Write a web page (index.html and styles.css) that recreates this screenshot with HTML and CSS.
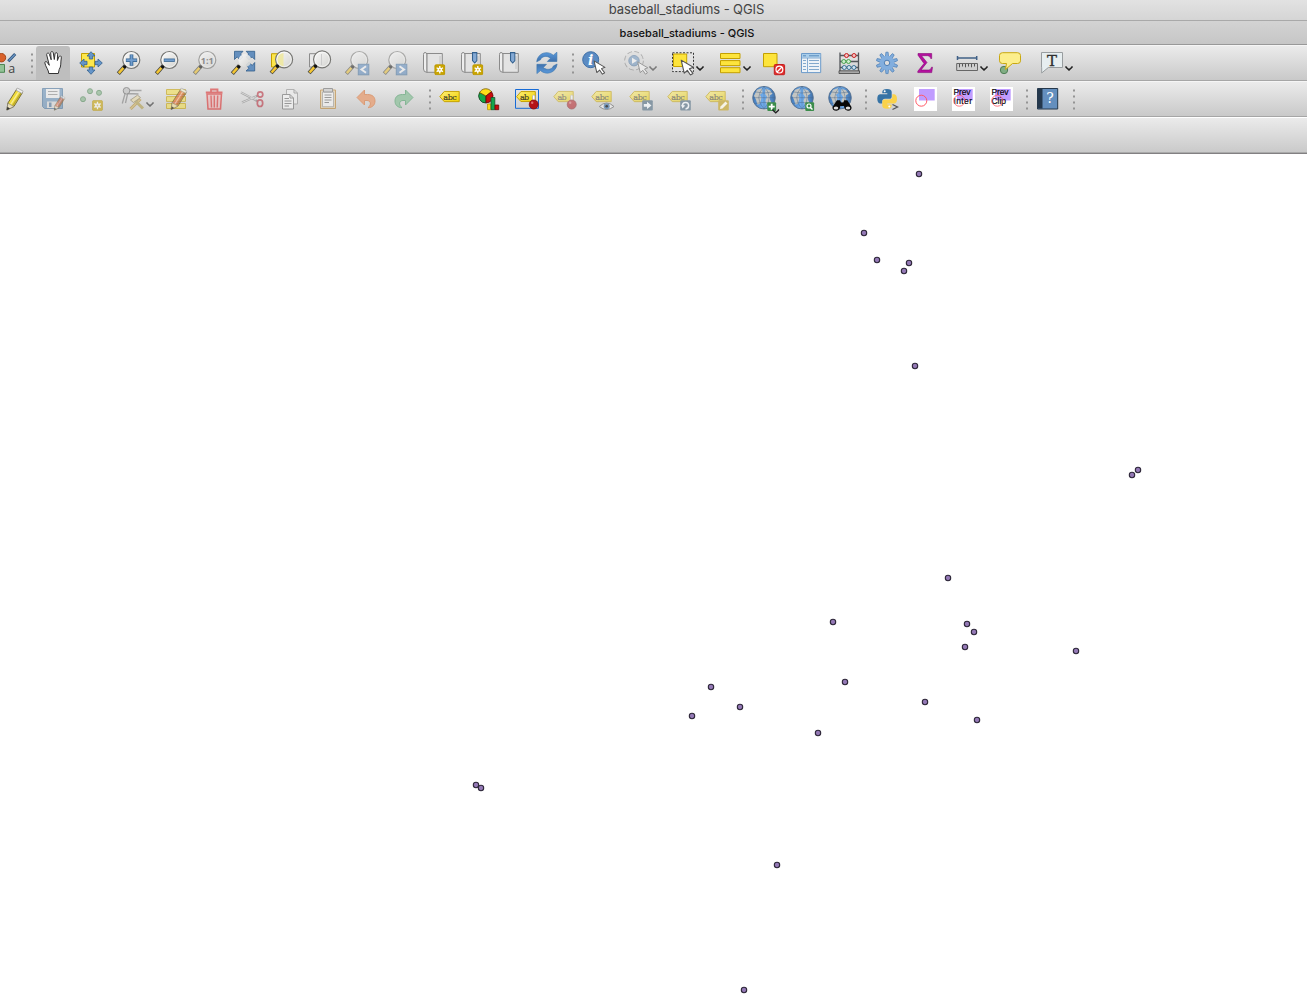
FILE: index.html
```html
<!DOCTYPE html>
<html lang="en">
<head>
<meta charset="utf-8">
<title>baseball_stadiums - QGIS</title>
<link rel="stylesheet" href="styles.css">
</head>
<body>
<svg class="defs" aria-hidden="true">
  <defs>
    <linearGradient id="gold" x1="0" y1="0" x2="1" y2="1"><stop offset="0" stop-color="#fff07a"/><stop offset="1" stop-color="#f0d000"/></linearGradient>
    <linearGradient id="lensfill" x1="0" y1="0" x2="1" y2="1"><stop offset="0" stop-color="#fbfbfb"/><stop offset="1" stop-color="#d2d2ce"/></linearGradient>
    <linearGradient id="bluefade" x1="0" y1="0" x2="0" y2="1"><stop offset="0" stop-color="#5b9bdd"/><stop offset="1" stop-color="#3f70ab"/></linearGradient>
    <linearGradient id="sea" x1="0" y1="0" x2="1" y2="0"><stop offset="0" stop-color="#3f78ba"/><stop offset=".5" stop-color="#75b2f2"/><stop offset="1" stop-color="#3e6fa8"/></linearGradient>
  </defs>
  <symbol id="lens" viewBox="0 0 38 36">
    <path d="M15.500 20.500L8.300 28.600" stroke="#4a4a40" stroke-width="4"/>
    <path d="M13.500 22.700L8.800 28.100" stroke="#f5c632" stroke-width="2.500"/>
    <circle cx="21.300" cy="15" r="8.500" fill="url(#lensfill)" stroke="#777774" stroke-width="1.200"/>
    <circle cx="21.300" cy="15" r="7.200" fill="none" stroke="#fff" stroke-width=".8" opacity=".7"/>
    <circle cx="14.700" cy="21.800" r="1.600" fill="#111"/>
  </symbol>
  <symbol id="chev" viewBox="0 0 8 6"><path d="M1 1V2L4 4.700L7 2V1" fill="none" stroke="#222" stroke-width="1.500"/></symbol>
  <symbol id="star" viewBox="0 0 11 11">
    <rect x=".4" y=".4" width="10.200" height="10.200" rx="1.600" fill="#c9a400" stroke="#b79300" stroke-width=".8"/>
    <path d="M5.500 1.800V9.200M2.300 3.600L8.700 7.400M8.700 3.600L2.300 7.400" stroke="#fff" stroke-width="1.300"/><circle cx="5.500" cy="5.500" r="2.300" fill="#fff"/><circle cx="5.500" cy="5.500" r=".9" fill="#d6ba3c"/>
  </symbol>
  <symbol id="arrow" viewBox="0 0 14 16"><path d="M.8.800L12.600 7.800L8.800 9.200L12.200 13.700L9.800 15.200L6.800 10.700L3.800 13.400Z" fill="#fff" stroke="#555" stroke-width="1.100" stroke-linejoin="round"/></symbol>
  <symbol id="scroll" viewBox="0 0 38 36">
    <path d="M12.800 8.500H28.300V27.300H12.800Z" fill="#e3e3e3" stroke="#8b8b8b"/>
    <path d="M12.800 9Q12.500 7.500 11 7.500Q9.500 7.500 9.500 9.500V24Q9.500 27.300 13 27.300Q12.700 27 12.800 24Z" fill="#eee" stroke="#8b8b8b"/>
    <path d="M26 11V24" stroke="#d3d3d3" stroke-width="2"/>
  </symbol>
  <symbol id="ribbon" viewBox="0 0 6 12"><path d="M.8.600H5.200V8.500L3 11L.8 8.500Z" fill="#84a9d4" stroke="#33618f" stroke-width="1.100"/></symbol>
  <symbol id="tag" viewBox="0 0 21 12">
    <path d="M.8 6L5.300.700H20.200V11H5.300Z" fill="url(#gold)" stroke="#c4a000" stroke-linejoin="round"/>
  </symbol>
  <symbol id="pencil" viewBox="0 0 18 24">
    <path d="M1.200 22.800L2.200 15.800L11 2L16.900 5.200L8.200 19.300Z" fill="currentColor" stroke="#6b6230" stroke-width=".9"/>
    <path d="M4.800 17.500L13.600 3.700" stroke="#fff" stroke-width="1.200" opacity=".5"/>
    <path d="M7 18.500L15.800 4.900" stroke="#7a6b18" stroke-width="1.300" opacity=".45"/>
    <path d="M10.200 3L11.700.800L17.500 4L16.200 6.200Z" fill="#eee" stroke="#999" stroke-width=".7"/>
    <path d="M1.200 22.800L2.200 16L8.200 19.300Z" fill="#eadfbd" stroke="#777" stroke-width=".6"/><path d="M1 23L1.700 19.500L4.300 21.200Z" fill="#333"/>
  </symbol>
  <symbol id="ball" viewBox="0 0 11 16"><path d="M4.300 1.800Q5.500.200 6.700 1.800V8H4.300Z" fill="#fff" stroke="#aaa" stroke-width=".7"/><circle cx="5.500" cy="10.500" r="4.500" fill="#b51218" stroke="#7e0d10" stroke-width=".8"/><circle cx="4" cy="8.800" r="1.200" fill="#dc6d70"/></symbol>
  <symbol id="globe" viewBox="0 0 24 24">
    <circle cx="12" cy="12" r="11.300" fill="url(#sea)" stroke="#56718f" stroke-width=".9"/>
    <path d="M5 4L10 2.500L10.500 7L8 9L9.500 12L8 18L5.500 19L4 14L2 10ZM13.500 3L18 4.500L20.500 8L18 9.500V14L19.500 17L15 20L13.500 15L15 11L13 8Z" fill="#c3c5c2"/>
    <path d="M12 .8V23.200M1 12H23M3 6.200Q12 8.500 21 6.200M3 17.800Q12 15.500 21 17.800M12 .8Q1.500 12 12 23.200M12 .8Q22.500 12 12 23.200" fill="none" stroke="#4a6685" stroke-width=".55" opacity=".8"/>
  </symbol>
  <symbol id="cog" viewBox="-12 -12 24 24">
    <g fill="currentColor" stroke="#4e7fb5" stroke-width=".7">
      <path id="tooth" d="M-1.600-6L-1.100-10.700H1.100L1.600-6V6L1.100 10.700H-1.100L-1.600 6Z"/>
      <use href="#tooth" transform="rotate(36)"/><use href="#tooth" transform="rotate(72)"/><use href="#tooth" transform="rotate(108)"/><use href="#tooth" transform="rotate(144)"/>
    </g>
    <circle r="7.200" fill="currentColor"/>
    <circle r="2.700" fill="#ddd" stroke="#4e7fb5"/>
  </symbol>
  <symbol id="grip" viewBox="0 0 9 36"><path d="M6 8.500h2v2h-2zM6 14.500h2v2h-2zM6 20.500h2v2h-2zM6 26.500h2v2h-2z" fill="#949494"/></symbol>
</svg>

<header class="title title-main">baseball_stadiums - QGIS</header>
<div class="title title-sub">baseball_stadiums - QGIS</div>

<nav class="toolbar">
  <svg class="tool lead"><circle cx="1.500" cy="12.700" r="4.200" fill="#d9622b" stroke="#a64616"/><path d="M8.300 16.200L15.200 9" stroke="#2e547e" stroke-width="3"/><path d="M8.800 15.600L14.800 9.500" stroke="#6e98c5" stroke-width="1.300"/><path d="M-1 19.500H4.500V27.300H-1Z" fill="#92c296" stroke="#4c8653"/><text x="8.300" y="27.500" class="glyph-a">a</text></svg>
  <svg class="grip"><use href="#grip"/></svg>
  <svg class="tool active"><path d="M14.800 28.500C14.700 25 11.600 22 10.800 17.800C10.800 16.200 12.700 16 13.500 17.800L15.300 20.300L12.700 9.900C12.500 7.900 14.700 7.400 15.400 9.300L17.200 14.800L16.700 8C16.800 6 19 6 19.300 8L20.300 14.500L21 8.800C21.500 7 23.500 7.400 23.500 9.300L23.400 15.500L24.900 11.800C25.700 10.200 27.800 10.900 27.300 12.900C26.500 17 27.400 21.600 25.200 24.500L24.300 28.500Z" fill="#fff" stroke="#333" stroke-width="1"/></svg>
  <svg class="tool"><path d="M9.500 8.500H22.500V22H9.500Z" fill="#fde74c" stroke="#c4a000"/><g fill="#6595c9" stroke="#35628f" stroke-width=".8"><path id="mv" d="M19 6.700L23 11H20.700V14H17.300V11H15Z"/><use href="#mv" transform="rotate(90 19 18)"/><use href="#mv" transform="rotate(180 19 18)"/><use href="#mv" transform="rotate(270 19 18)"/></g></svg>
  <svg class="tool"><use href="#lens"/><path d="M21.500 9.600V20.800M15.900 15.200H27.100" stroke="#31618e" stroke-width="3.600"/><path d="M21.500 10V20.400M16.300 15.200H26.700" stroke="#719dce" stroke-width="2"/></svg>
  <svg class="tool"><use href="#lens"/><path d="M15.800 15.200H26.800" stroke="#31618e" stroke-width="3.300"/><path d="M16.300 15.200H26.300" stroke="#719dce" stroke-width="1.800"/></svg>
  <svg class="tool"><g opacity=".6"><use href="#lens"/><text x="21.300" y="19" class="one" text-anchor="middle">1:1</text></g></svg>
  <svg class="tool"><g fill="#648fbe" stroke="#315e8b" stroke-width=".8"><path id="cn" d="M10.500 6.300H19L16.500 9L19 12L16 15L13.200 11.800L10.500 14.500Z"/><use href="#cn" transform="translate(41.200 0) scale(-1 1)"/><path d="M30.700 26H22L25 23.300L22 20L25 17L28.200 20.500L30.700 17.500Z"/></g><path d="M15.500 20.500L8.300 28.600" stroke="#4a4a40" stroke-width="4"/><path d="M13.500 22.700L8.800 28.100" stroke="#f5c632" stroke-width="2.500"/><circle cx="21" cy="15.500" r="6.500" fill="url(#lensfill)" opacity=".92"/><circle cx="14.700" cy="21.800" r="1.600" fill="#111"/></svg>
  <svg class="tool"><path d="M9.500 8.700H20V22H9.500Z" fill="#fde74c" stroke="#c4a000"/><g transform="translate(.8 -.6)"><use href="#lens" width="38" height="36"/></g><path d="M21.500 8V21.500Q15.500 20 15.500 14.500T21.500 8" fill="#eee8a0" opacity=".9"/></svg>
  <svg class="tool"><path d="M9.500 8.700H20V22H9.500Z" fill="#e9e9e9" stroke="#8c8c8c"/><g transform="translate(.8 -.6)"><use href="#lens" width="38" height="36"/></g><path d="M21.500 9V20" stroke="#ccc"/></svg>
  <svg class="tool"><g opacity=".52"><use href="#lens"/><rect x="20.300" y="19.300" width="10.500" height="10.500" fill="#5b8cc2" stroke="#3e6e9f"/><path d="M28 21.300L23.500 24.500L28 27.800" fill="none" stroke="#fff" stroke-width="2"/></g></svg>
  <svg class="tool"><g opacity=".52"><use href="#lens"/><rect x="20.300" y="19.300" width="10.500" height="10.500" fill="#5b8cc2" stroke="#3e6e9f"/><path d="M23.500 21.300L28 24.500L23.500 27.800" fill="none" stroke="#fff" stroke-width="2"/></g></svg>
  <svg class="tool"><use href="#scroll"/><use href="#star" x="20.300" y="19.200" width="11" height="11"/></svg>
  <svg class="tool"><use href="#scroll"/><use href="#ribbon" x="19.700" y="7" width="6" height="12"/><use href="#star" x="20.300" y="19.200" width="11" height="11"/></svg>
  <svg class="tool"><use href="#scroll"/><use href="#ribbon" x="19.700" y="7" width="6" height="12"/></svg>
  <svg class="tool"><path id="rf" d="M8.700 16.800C9.500 8 19.500 5 25.300 10.200L28.900 7.200V16.500H19.300L22.500 13.200C18.500 9.800 13 11.800 12.500 14.800Z" fill="url(#bluefade)" stroke="#3973ad" stroke-width=".6"/><use href="#rf" transform="rotate(180 18.900 17.900)"/></svg>
  <svg class="grip"><use href="#grip"/></svg>
  <svg class="tool"><circle cx="15.700" cy="14.700" r="8" fill="#5a8bc3" stroke="#3f70a7"/><text x="15.700" y="20" class="info" text-anchor="middle">i</text><use href="#arrow" x="18.300" y="15" width="13" height="15"/></svg>
  <svg class="tool menu"><g opacity=".5"><circle cx="21" cy="15.700" r="8" fill="#ddd" stroke="#777" stroke-width="3.600" stroke-dasharray="4.300 1.980"/><circle cx="21" cy="15.700" r="8" fill="#ddd" stroke="#ddd" stroke-width="2"/><circle cx="21" cy="15.700" r="5.200" fill="#6590bd" stroke="#456f9d"/><path d="M19 12.700L24 15.700L19 18.700Z" fill="#fff"/><use href="#arrow" x="24" y="16" width="12" height="14"/><use href="#chev" x="36" y="20.200" width="8" height="6"/></g></svg>
  <svg class="tool menu"><path d="M12.500 7.800H33.500V26.600H12.500Z" fill="#e3e3e3" stroke="#333" stroke-dasharray="2 1.500"/><path d="M13.500 9H26.700V21.500H13.500Z" fill="#fde43c" stroke="#c9a400"/><use href="#arrow" x="20.300" y="14.300" width="14.500" height="16.500"/><use href="#chev" x="36" y="20.200" width="8" height="6"/></svg>
  <svg class="tool menu wide"><path d="M13.500 8.500H33V13.500H13.500ZM13.500 15.600H33V20.600H13.500ZM13.500 22.700H33V27.700H13.500Z" fill="#fde43c" stroke="#c4a000"/><use href="#chev" x="36" y="20.200" width="8" height="6"/></svg>
  <svg class="tool"><path d="M8.500 8.500H22V21.700H8.500Z" fill="#fde43c" stroke="#c4a000"/><rect x="19.300" y="19.500" width="10.300" height="10.200" rx="1" fill="#e12c2c" stroke="#c31d1d"/><circle cx="24.400" cy="24.600" r="3.400" fill="none" stroke="#fff" stroke-width="1.200"/><path d="M22 27L27 22" stroke="#fff" stroke-width="1.200"/></svg>
  <svg class="tool"><path d="M8.500 8.500H27.700V27.600H8.500Z" fill="#eef3f7" stroke="#6b9aca"/><path d="M9 9H27.200V12.500H9Z" fill="#a8cdea"/><path d="M8.500 13H27.700M14.500 13V27.500" stroke="#6b9aca" stroke-width=".8"/><path d="M10 15.500H13M16 15.500H26M10 18.500H13M16 18.500H26M10 21.500H13M16 21.500H26M10 24.500H13M16 24.500H26" stroke="#83a9cc" stroke-width="1.100"/><path d="M10 10.800H13M16 10.800H26" stroke="#5a8cbd"/></svg>
  <svg class="tool"><path d="M9 7.500V28M27.500 7.500V28M8 27.500H28.500M9 10.500H27.500M9 16.500H27.500M9 22.500H27.500" fill="none" stroke="#53565a" stroke-width="1.300"/><path d="M8 25.800H28.500V28.500H8Z" fill="#a8a8a8" stroke="#444" stroke-width=".8"/><g stroke-width="1"><g fill="#f6c0c0" stroke="#c82020"><circle cx="15.500" cy="10.500" r="2"/><circle cx="23" cy="10.500" r="2"/></g><g fill="#cdeccd" stroke="#4aa650"><circle cx="12.800" cy="16.500" r="2"/><circle cx="17.500" cy="16.500" r="2"/></g><g fill="#d2e2f2" stroke="#3a7396"><circle cx="13.300" cy="22.500" r="2"/><circle cx="18" cy="22.500" r="2"/><circle cx="22.900" cy="22.500" r="2"/></g></g></svg>
  <svg class="tool gear"><use href="#cog" x="6" y="5.900" width="24" height="24"/></svg>
  <svg class="tool"><path d="M11 8.500H24.700V13.500H23.700Q23.300 10.700 20.500 10.700H14.500L20 17.500L14 25H21.500Q24 25 24.500 22.200H25.500L24.700 27.600H10.800V26.200L17 18.500L11 10.200Z" fill="#b5109f" stroke="#840a77" stroke-width=".6"/></svg>
  <svg class="tool menu snug"><path d="M12.500 13H31.700M12.500 11V15M31.700 11V15" stroke="#416187" stroke-width="1.500"/><path d="M11.700 18.500H32.500V25.500H11.700Z" fill="#cfcfcf" stroke="#666"/><path d="M14.500 19V22.300M17.500 19V21.500M20.500 19V22.300M23.500 19V21.500M26.500 19V22.300M29.500 19V21.500" stroke="#555"/><use href="#chev" x="35" y="20.200" width="8" height="6"/></svg>
  <svg class="tool"><circle cx="13" cy="25" r="3.700" fill="#80ad84" stroke="#4f7e55"/><path d="M11.500 7.700H26.500Q29.500 7.700 29.500 10.500V15.800Q29.500 18.500 26.500 18.500H21.500L14.500 24.500L15.500 18.500H11.500Q8.500 18.500 8.500 15.800V10.500Q8.500 7.700 11.500 7.700Z" fill="#fcee8c" stroke="#c9a810"/></svg>
  <svg class="tool menu"><path d="M12.500 7.500H33.500V22.500H19.300L12.700 28V22.500H12.500Z" fill="#e7eef0" stroke="#989d9f"/><text x="23" y="20.500" class="serif-t" text-anchor="middle">T</text><use href="#chev" x="36" y="20.200" width="8" height="6"/></svg>
</nav>

<nav class="toolbar edit">
  <svg class="tool cut pen"><use href="#pencil" x="9.700" y="6.200" width="18" height="24"/></svg>
  <svg class="tool"><g opacity=".55"><path d="M8.500 7.500H28.500V27.500H10.500L8.500 25.500Z" fill="#628eb8" stroke="#3e6c98"/><path d="M12 8H25.500V17H12Z" fill="#f3f3f3"/><path d="M14 10.500H23.500M14 13.500H23.500" stroke="#888"/><path d="M13 20.500H24V27H13Z" fill="#ddd"/><path d="M15 21.500H17.500V26H15Z" fill="#456f98"/></g><g opacity=".65" class="redpen"><use href="#pencil" x="19.500" y="14" width="12" height="16"/></g></svg>
  <svg class="tool"><g opacity=".58"><g fill="#84b48a" stroke="#4f8757"><circle cx="11" cy="18.200" r="2.500"/><circle cx="18" cy="10.200" r="2.500"/><circle cx="27" cy="11.800" r="2.500"/></g><use href="#star" x="20" y="19" width="11" height="11"/></g></svg>
  <svg class="tool menu"><g opacity=".55"><path d="M15.500 11L12.300 22.500M18 11L15.500 22M18 9.500H31.500M18 12.500L28.500 13" stroke="#777" stroke-width="1.300"/><circle cx="16.500" cy="9.800" r="3.300" fill="#bbb" stroke="#555"/><path d="M20.500 28L30.500 18" stroke="#b48a24" stroke-width="3"/><path d="M20.500 28L30 18.500" stroke="#ead38a"/><path d="M24.500 19L33 27.500" stroke="#b09a40" stroke-width="3"/><path d="M20.500 19L27.500 14.200L30.500 16.500L23.500 21.500Z" fill="#ead9a0" stroke="#887a55"/><use href="#chev" x="36" y="20.200" width="8" height="6"/></g></svg>
  <svg class="tool"><g opacity=".58"><path d="M9.500 8.500H28.500V13.500H9.500ZM9.500 15.600H28.500V20.600H9.500ZM9.500 22.500H28.500V27.500H9.500Z" fill="#f5e04d" stroke="#c4a000"/></g><g opacity=".75" class="redpen"><use href="#pencil" x="13" y="6.200" width="17.500" height="23.500"/></g></svg>
  <svg class="tool"><g opacity=".6"><path d="M12 13H26.500L25.500 28H13Z" fill="#efb7b7" stroke="#dc3030" stroke-width="1.500"/><path d="M10.800 11.500H27.500M16 11V8.500H22.500V11" fill="none" stroke="#dc3030" stroke-width="1.800"/><path d="M16 14.500L16.500 26.500M19.300 14.500V26.500M22.700 14.500L22.200 26.500" stroke="#dc3030" stroke-width="1.400"/></g></svg>
  <svg class="tool"><g opacity=".55"><path d="M8 11.500L25 20.500M9 21.500L25 14.500" stroke="#777" stroke-width="2"/><path d="M8 11.500L23 19M9 21.500L23 15.500" stroke="#eee" stroke-width=".8"/><circle cx="27.200" cy="13.500" r="2.600" fill="none" stroke="#b82636" stroke-width="1.700"/><ellipse cx="27" cy="22.200" rx="2.700" ry="3.300" fill="none" stroke="#b82636" stroke-width="1.700"/></g></svg>
  <svg class="tool"><g opacity=".65"><path d="M15.500 8.500H23L26.500 12V23H15.500Z" fill="#eee" stroke="#999"/><path d="M23 8.500V12H26.500" fill="none" stroke="#888"/><path d="M11.500 13.500H19L22.500 17V28H11.500Z" fill="#f7f7f7" stroke="#777"/><path d="M19 13.500V17H22.500" fill="none" stroke="#777"/><path d="M13.500 17.500H18M13.500 20H20.500M13.500 22.500H20.500M13.500 25H18" stroke="#777"/></g></svg>
  <svg class="tool"><g opacity=".65"><path d="M11.500 9H26.500V27.500H11.500Z" fill="#e5d2b0" stroke="#bd8a40"/><path d="M13.500 11H24.500V25.700H13.500Z" fill="#f5f5f5" stroke="#888" stroke-width=".7"/><path d="M14.500 7.500H23.500V11H14.500Z" fill="#ccc" stroke="#777"/><path d="M15.500 14H22.500M15.500 16.500H22.500M15.500 19H22.500M15.500 21.500H20" stroke="#777"/></g></svg>
  <svg class="tool"><path d="M10 16.500L17.500 9V13.500H20.500C25.500 13.500 28 16 28 20C28 24 25.500 26.500 21 26.700C25 23.500 23.500 19.500 20 19.500H17.500V24Z" fill="#e4ac8b" stroke="#d99770" stroke-width=".9"/></svg>
  <svg class="tool"><path d="M28 16.500L20.500 9V13.500H17.500C12.500 13.500 10 16 10 20C10 24 12.500 26.500 17 26.700C13 23.500 14.500 19.500 18 19.500H20.500V24Z" fill="#a2c7ac" stroke="#7fb291" stroke-width=".9"/></svg>
  <svg class="grip"><use href="#grip"/></svg>
  <svg class="tool"><use href="#tag" x="7" y="9.700" width="21" height="12"/><text x="11.300" y="18.500" class="abc" textLength="13.500">abc</text></svg>
  <svg class="tool"><path d="M16 15L9.600 11.500A7 7 0 0 0 16 22Z" fill="#16a84a" stroke="#173b20" stroke-width=".8"/><path d="M16 15L9.600 11.500A7 7 0 0 1 21.500 10.700Z" fill="#ffdd19" stroke="#795b05" stroke-width=".8"/><path d="M16 15L21.500 10.700A7 7 0 0 1 16 22Z" fill="#c90c0c" stroke="#650909" stroke-width=".8"/><path d="M17.500 23H20.800V28.700H17.500Z" fill="#ffdd19" stroke="#c09a00" stroke-width=".8"/><path d="M21 16.500H24.800V28.700H21Z" fill="#13a54b" stroke="#17522b" stroke-width=".8"/><path d="M25 24H28.700V28.700H25Z" fill="#c60c0c" stroke="#690909" stroke-width=".8"/></svg>
  <svg class="tool"><path d="M7.500 8.500H30.500V27.300H7.500Z" fill="none" stroke="#176bd6"/><use href="#tag" x="7.800" y="9.700" width="20.300" height="12"/><text x="12" y="18.500" class="abc" textLength="9">ab</text><use href="#ball" x="20.200" y="13" width="11" height="16"/></svg>
  <svg class="tool"><g opacity=".5"><use href="#tag" x="7" y="9.700" width="21" height="12"/><text x="11.500" y="18.500" class="abc" textLength="9">ab</text><use href="#ball" x="20.200" y="13" width="11" height="16"/></g></svg>
  <svg class="tool"><g opacity=".55"><use href="#tag" x="7" y="9.700" width="21" height="12"/><text x="11.300" y="18.500" class="abc" textLength="13.500">abc</text></g><g opacity=".7"><path d="M15.300 25.500Q22.500 18.500 30 25.500Q22.500 31.500 15.300 25.500Z" fill="#eee" stroke="#777"/><circle cx="22.700" cy="25.200" r="3" fill="#5280af"/><circle cx="22.700" cy="25.200" r="1.300" fill="#111"/></g></svg>
  <svg class="tool"><g opacity=".55"><use href="#tag" x="7" y="9.700" width="21" height="12"/><text x="11.300" y="18.500" class="abc" textLength="13.500">abc</text></g><rect x="20.200" y="19.200" width="10.600" height="10.300" rx="1" fill="#8798a5"/><path d="M21.800 23H25V20.800L29.500 24.400L25 28V25.800H21.800Z" fill="#edf0f2"/></svg>
  <svg class="tool"><g opacity=".55"><use href="#tag" x="7" y="9.700" width="21" height="12"/><text x="11.300" y="18.500" class="abc" textLength="13.500">abc</text></g><rect x="20.200" y="19.200" width="10.600" height="10.300" rx="1" fill="#8798a5"/><path d="M25.500 28C29.800 27.500 29.500 21.500 25.700 21.500C23 21.500 22.300 23 22.800 25" fill="none" stroke="#edf0f2" stroke-width="1.500"/><path d="M21 23.800L25.300 24.500L22.500 27.500Z" fill="#edf0f2"/></svg>
  <svg class="tool"><g opacity=".55"><use href="#tag" x="7" y="9.700" width="21" height="12"/><text x="11.300" y="18.500" class="abc" textLength="13.500">abc</text></g><rect x="20.200" y="19.200" width="10.600" height="10.300" rx="1" fill="#cdb765"/><path d="M22 28L22.500 25.500L27.500 20.500L29.500 22.500L24.500 27.500Z" fill="#f5f2e6"/></svg>
  <svg class="grip"><use href="#grip"/></svg>
  <svg class="tool"><use href="#globe" x="7" y="4.700" width="24" height="24"/><rect x="22.300" y="21.300" width="8.800" height="8.800" rx="1" fill="#3c8d4b"/><path d="M26.700 22.700V28.700M23.700 25.700H29.700" stroke="#fff" stroke-width="1.800"/><use href="#chev" x="27" y="27.300" width="7.500" height="5.600"/></svg>
  <svg class="tool"><use href="#globe" x="7" y="4.700" width="24" height="24"/><rect x="22.300" y="21.300" width="8.800" height="8.800" rx="1" fill="#3c8d4b"/><circle cx="26" cy="25" r="2" fill="none" stroke="#fff" stroke-width="1.200"/><path d="M27.400 26.400L29.500 28.600" stroke="#fff" stroke-width="1.400"/></svg>
  <svg class="tool"><use href="#globe" x="7" y="4.700" width="24" height="24"/><path d="M11.500 26L16 19.300H19L20 21.500H22.300L23.300 19.300H26.300L30.500 26Q31 29.700 27 29.700Q23.500 29.500 23 25H19.300Q19 29.500 15.500 29.700Q11 29.700 11.500 26Z" fill="#070707"/><ellipse cx="15" cy="27" rx="2.300" ry="1.500" fill="#ddd"/><ellipse cx="27" cy="27" rx="2.300" ry="1.500" fill="#ddd"/></svg>
  <svg class="grip"><use href="#grip"/></svg>
  <svg class="tool"><path d="M14.300 11Q14.300 8 19 8T23.700 11V15.500Q23.700 17.800 21 17.800H17Q14.300 17.800 14.300 20.300V22.500H12Q9.300 22 9.300 17.800T12 13.200H19.300V12.300H14.300Z" fill="#3673a5"/><path d="M23.700 24.700Q23.700 27.700 19 27.700T14.300 24.700V20.700Q14.300 18.400 17 18.400H21Q24.300 18.400 24.300 15.700V13.300H26.300Q29 14 29 18T26.300 22.500H19.300V23.400H23.700Z" fill="#fad24a"/><circle cx="16.700" cy="10.300" r="1" fill="#fff"/><circle cx="21.300" cy="25.400" r="1" fill="#fff"/><path d="M24.500 23.500L29.500 26L24.500 28.500" fill="none" stroke="#555" stroke-width="1.300"/></svg>
  <svg class="tool"><path d="M8 6H31V30H8Z" fill="#fff"/><path d="M13 8H28.700V19.500H13Z" fill="#c09cff"/><circle cx="15.300" cy="19.700" r="5.500" fill="none" stroke="#ff5966"/></svg>
  <svg class="tool"><path d="M8 6H31V30H8Z" fill="#fff"/><path d="M13 8H28.700V19.500H13Z" fill="#c09cff"/><text x="9.500" y="14.200" class="prev" textLength="17">Prev</text><text x="9.500" y="23.200" class="prev" textLength="18.500">Inter</text><circle cx="15.300" cy="19.700" r="5.500" fill="none" stroke="#ff5966" opacity=".8"/></svg>
  <svg class="tool"><path d="M8 6H31V30H8Z" fill="#fff"/><path d="M13 8H28.700V19.500H13Z" fill="#c09cff"/><text x="9.500" y="14.200" class="prev" textLength="17">Prev</text><text x="9.500" y="23.200" class="prev" textLength="14.500">Clip</text><circle cx="15.300" cy="19.700" r="5.500" fill="none" stroke="#ff5966" opacity=".8"/></svg>
  <svg class="grip"><use href="#grip"/></svg>
  <svg class="tool"><path d="M8.500 7.500H28.700V28H8.500Z" fill="#648fbe" stroke="#26394c"/><path d="M9 8H13.500V27.500H9Z" fill="#24384d"/><text x="21" y="22.300" class="question" text-anchor="middle">?</text></svg>
  <svg class="grip"><use href="#grip"/></svg>
</nav>
<div class="toolbar empty"></div>

<main class="canvas">
  <svg class="points" viewBox="0 154 1307 853">
    <g>
      <circle cx="919" cy="174" r="2.700"/><circle cx="864" cy="233" r="2.700"/><circle cx="877" cy="260" r="2.700"/><circle cx="909" cy="263" r="2.700"/><circle cx="904" cy="271" r="2.700"/><circle cx="915" cy="366" r="2.700"/>
      <circle cx="1138" cy="470" r="2.700"/><circle cx="1132" cy="475" r="2.700"/><circle cx="948" cy="578" r="2.700"/><circle cx="833" cy="622" r="2.700"/><circle cx="967" cy="624" r="2.700"/><circle cx="974" cy="632" r="2.700"/>
      <circle cx="965" cy="647" r="2.700"/><circle cx="1076" cy="651" r="2.700"/><circle cx="845" cy="682" r="2.700"/><circle cx="711" cy="687" r="2.700"/><circle cx="925" cy="702" r="2.700"/><circle cx="740" cy="707" r="2.700"/>
      <circle cx="692" cy="716" r="2.700"/><circle cx="977" cy="720" r="2.700"/><circle cx="818" cy="733" r="2.700"/><circle cx="476" cy="785" r="2.700"/><circle cx="481" cy="788" r="2.700"/><circle cx="777" cy="865" r="2.700"/><circle cx="744" cy="990" r="2.700"/>
    </g>
  </svg>
</main>
</body>
</html>
```
FILE: styles.css
```css
* { box-sizing: border-box; }
html, body { height: 100%; }
body {
  margin: 0;
  display: flex;
  flex-direction: column;
  overflow: hidden;
  background: #fff;
  font-family: Inter, "Liberation Sans", sans-serif;
}
.defs { width: 0; height: 0; flex: none; position: absolute; }
.title {
  flex: none;
  display: flex;
  align-items: center;
  justify-content: center;
  padding-left: 66px;
  white-space: nowrap;
}
.title-main {
  height: 21px;
  padding-bottom: 2px;
  background: linear-gradient(#e2e2e2, #d5d5d5);
  border-bottom: 1px solid #a9a9a9;
  color: #444;
  font-size: 13px;
  letter-spacing: -0.1px;
}
.title-sub {
  height: 24px;
  background: linear-gradient(#d3d3d3, #c6c6c6);
  border-bottom: 1px solid #989898;
  padding-left: 67px;
  color: #111;
  font-size: 11px;
  font-weight: 500;
}
.toolbar {
  flex: none;
  height: 36px;
  display: flex;
  background: linear-gradient(#ebebeb, #c9c9c9);
  border-top: 1px solid #f5f5f5;
  border-bottom: 1px solid #a6a6a6;
}
.toolbar.empty {
  height: 37px;
  border-top-color: #fff;
  border-bottom-color: #828082;
  box-shadow: inset 0 -1px #aaa;
}
.tool { flex: none; width: 38px; height: 36px; margin-top: -1px; overflow: visible; }
.tool use:not([width]) { width: 38px; height: 36px; }
.lead { width: 25px; }
.cut { margin-left: -4px; }
.menu { width: 47px; }
.wide { width: 48px; }
.snug { width: 46px; }
.active {
  width: 34px;
  height: 34px;
  margin: 0 2px;
  border-radius: 3px 3px 0 0;
  background: #bebebe;
}
.active path { transform: translate(-2px, -1px); }
.grip { flex: none; width: 9px; height: 36px; margin-top: -1px; }
.gear { color: #82aede; }
.pen { color: #f1dc3b; }
.redpen { color: #dd7856; }
.glyph-a { font: 12.500px "Open Sans", sans-serif; fill: #444; }
.one { font: bold 9px "Open Sans", sans-serif; fill: #555; }
.info { font: italic bold 14px "DejaVu Serif", serif; fill: #fff; }
.serif-t { font: 15px "DejaVu Serif", serif; fill: #303030; stroke: #303030; stroke-width: .3px; }
.abc { font: 8px "DejaVu Serif", serif; fill: #3d3a2c; stroke: #3d3a2c; stroke-width: .15px; }
.prev { font: 8.500px "Liberation Sans", sans-serif; fill: #000; stroke: #000; stroke-width: .15px; }
.question { font: 14px "DejaVu Serif", serif; fill: #fff; }
.canvas { flex: 1; min-height: 0; background: #fff; }
.points { display: block; width: 100%; height: 100%; }
.points circle { fill: #9479b6; stroke: #2e2739; stroke-width: 1.100; }
```
